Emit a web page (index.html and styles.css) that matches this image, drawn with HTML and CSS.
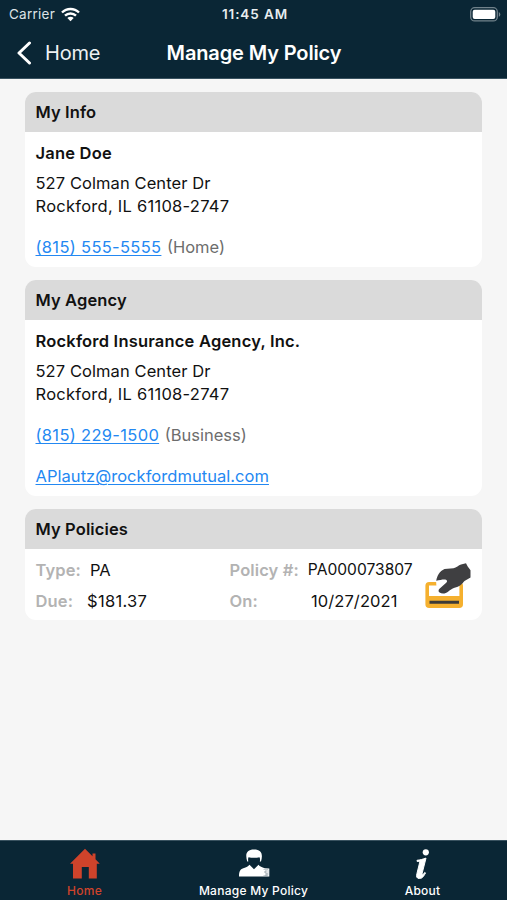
FILE: index.html
```html
<!DOCTYPE html>
<html lang="en">
<head>
<meta charset="utf-8">
<title>Manage My Policy</title>
<link rel="stylesheet" href="styles.css">
</head>
<body>
<div class="app">
  <header class="top">
    <div class="status">
      <div class="carrier"><span>Carrier</span>
        <svg width="19" height="15" viewBox="0 0 19 15" fill="none" stroke="#fff" stroke-width="2.4"><path d="M1 5.5C5.8.8 13.2.8 18 5.5M4 8.7c3.1-3 7.900-3 11 0"/><path d="M6.300 11.100c1.900-1.700 4.500-1.700 6.400 0L9.500 14.300z" fill="#fff" stroke="none"/></svg>
      </div>
      <div class="clock">11:45 AM</div>
      <svg class="battery" width="31" height="15" viewBox="0 0 31 15"><rect x=".7" y=".7" width="26.600" height="13.200" rx="4" fill="none" stroke="#71828b" stroke-width="1.300"/><rect x="2.700" y="2.700" width="22.600" height="9.300" rx="2" fill="#fff"/><path d="M28.800 5v4.800q1.500-.8 1.500-2.400T28.800 5z" fill="#71828b"/></svg>
    </div>
    <nav class="navbar">
      <a class="back"><svg width="16" height="24" viewBox="0 0 16 24"><path d="M13.500 2 3 12l10.500 10" fill="none" stroke="#fff" stroke-width="3" stroke-linecap="round" stroke-linejoin="round"/></svg><span>Home</span></a>
      <h1>Manage My Policy</h1>
    </nav>
  </header>
  <main>
    <section class="card">
      <h2>My Info</h2>
      <div class="body">
        <h3>Jane Doe</h3>
        <p class="addr">527 Colman Center Dr<br><span class="city">Rockford, IL 61108-2747</span></p>
        <p class="contact"><a class="link phone">(815) 555-5555</a><span class="kind">(Home)</span></p>
      </div>
    </section>
    <section class="card">
      <h2>My Agency</h2>
      <div class="body">
        <h3>Rockford Insurance Agency, Inc.</h3>
        <p class="addr">527 Colman Center Dr<br><span class="city">Rockford, IL 61108-2747</span></p>
        <p class="contact"><a class="link phone">(815) 229-1500</a><span class="kind">(Business)</span></p>
        <p class="contact"><a class="link email">APlautz@rockfordmutual.com</a></p>
      </div>
    </section>
    <section class="card">
      <h2>My Policies</h2>
      <div class="policy">
        <div class="fields">
          <div class="field"><b>Type:</b><span class="type">PA</span></div>
          <div class="field"><b>Policy #:</b><span class="number">PA000073807</span></div>
          <div class="field"><b>Due:</b><span class="due">$181.37</span></div>
          <div class="field"><b>On:</b><span class="date">10/27/2021</span></div>
        </div>
        <svg class="pay" width="48" height="48" viewBox="0 0 48 48"><rect x="2.200" y="21.700" width="34" height="22.600" rx="2" fill="#fff" stroke="#f5b02e" stroke-width="3.600"/><path d="M2 34h34.500v10H2z" fill="#f5b02e"/><path d="M4.500 38.800h29.500v3H4.500z" fill="#3b3a38"/><path d="M11 18h20l2.500 1v5.500l-7 2-8 6-6-2-1-5z" fill="#fff"/><path d="M11.200 18.700C12.300 13.500 14.500 9.300 19.500 7l9-.700c3-.500 5-3.300 7.500-3.800L41 1.200l1.700 3.300 2.800 3.700v7.300L39.500 19c-2.500 3-5 5.800-10 6.700-2.500 1-4.500 2.200-6.500 4-2.500 2-6 2.500-8.800.5-1-1-.7-2.500.3-3.500l5-4.500c2.500-1.800 3.500-3.300 1.500-4.500-2-.800-5.600.2-9.800 1z" fill="#3f3f41"/></svg>
      </div>
    </section>
  </main>
  <footer class="tabs">
    <a class="tab active"><svg width="32" height="32" viewBox="0 0 32 32"><path d="M16 .800 1 15.800h3V30.500h8.800V19h7v11.500h8V15.800h3L26.500 11.300V5.500h-3v2.800z" fill="#cf432b"/></svg><span>Home</span></a>
    <a class="tab middle"><svg width="32" height="32" viewBox="0 0 32 32"><path d="M9.200 13.500C7 6 8.500 1.500 16 1.500s9.200 4.500 7 12h-1.200c.4-1.600.3-3.200-.3-4.300-3.300.7-7.700.7-11 0-.5 1.100-.5 2.700-.2 4.300z" fill="#fff"/><path d="M1 28.500c0-5 1-7.300 4.300-8.300 3.200-1 5-1.800 6.200-3.400l4.500 4.400 4.500-4.400c1.300 1.800 3.500 2.700 6.200 3.400l4.600.3v8z" fill="#fff"/><path d="M25.500 21.500h4.500v6h-4.500" fill="none" stroke="#aeb8be" stroke-width=".7"/><path d="M29 23h-2v2h2v2h-2" fill="none" stroke="#8b989f" stroke-width=".8"/></svg><span>Manage My Policy</span></a>
    <a class="tab"><svg width="32" height="32" viewBox="0 0 32 32"><circle cx="18.800" cy="4.300" r="3.100" fill="#fff"/><path d="M10 12.300c3-.3 5.500-1 9-2.200l-3.800 15c-.5 2 .7 2 2.500-.7l.8.500c-2 4-3.500 5.600-6 5.600-2.800 0-3.400-1.800-2.600-4.800l2.400-9.700c.6-2.200.1-2.600-2.300-2.700z" fill="#fff" stroke="#fff" stroke-width="1"/></svg><span>About</span></a>
  </footer>
</div>
</body>
</html>
```
FILE: styles.css
```css
* { box-sizing: border-box; }
body { margin: 0; font-family: Inter, "Liberation Sans", sans-serif; color: #111; background: #f6f6f6; }
h1, h2, h3, p { margin: 0; }
.app { height: 900px; display: flex; flex-direction: column; }
.top { height: 79px; background: #0a2635; color: #fff; border-bottom: 1px solid #395260; flex: none; }
.status { height: 28px; display: grid; grid-template-columns: 1fr auto 1fr; align-items: center; padding: 0 6px 0 9px; font-size: 13px; }
.carrier { display: flex; align-items: center; gap: 6px; font-size: 13.500px; letter-spacing: .25px; color: #dde3e6; }
.clock { font-size: 13.500px; font-weight: 600; letter-spacing: .9px; color: #e8edef; }
.battery { justify-self: end; }
.navbar { height: 49px; display: grid; grid-template-columns: 1fr auto 1fr; align-items: center; padding: 0 15px 0 16px; }
.back { display: flex; align-items: center; gap: 13px; font-size: 20px; letter-spacing: -.2px; color: #edf1f3; }
h1 { font-size: 20px; font-weight: 600; letter-spacing: -.13px; }
main { flex: 1; padding: 13px 25px 0; display: flex; flex-direction: column; gap: 13px; }
.card { background: #fff; border-radius: 11px; overflow: hidden; }
h2 { height: 40px; line-height: 41px; padding-left: 10.500px; background: #dadada; font-size: 16.500px; font-weight: 600; letter-spacing: .12px; }
.body { padding: 9px 10.500px 8px; }
h3 { font-size: 16.500px; line-height: 24px; font-weight: 600; letter-spacing: .2px; }
.addr { margin-top: 7px; font-size: 16.500px; line-height: 23px; letter-spacing: .08px; }
.city { letter-spacing: .26px; }
.contact { margin-top: 18px; font-size: 16.500px; line-height: 23px; display: flex; gap: 5.500px; }
.link { color: #2388f2; text-decoration: underline; text-underline-offset: 2px; text-decoration-thickness: 1px; }
.phone { letter-spacing: .32px; }
.email { letter-spacing: .04px; }
.kind { color: #6d6d6d; }
.policy { height: 71px; display: flex; padding: 5px 9px 4px 10.500px; }
.fields { display: grid; grid-template-columns: 194px 195.500px; grid-template-rows: 31px 31px; font-size: 16.500px; align-items: center; }
.field { display: flex; align-items: center; }
.field b { color: #b3b3b3; font-weight: 600; letter-spacing: .12px; }
.type { margin-left: 9px; }
.due { margin-left: 14px; letter-spacing: .3px; }
.number { margin-left: 9px; font-size: 15.600px; }
.date { margin-left: 53px; letter-spacing: .1px; }
.pay { margin-top: 8px; flex: none; }
.tabs { height: 60px; flex: none; background: #0a2635; border-top: 1px solid #395260; display: grid; grid-template-columns: repeat(3, 1fr); color: #fff; font-size: 12px; font-weight: 500; }
.tab { display: flex; flex-direction: column; align-items: center; padding-top: 7px; line-height: 16px; gap: 3px; letter-spacing: .25px; }
.active { color: #cf432b; }
```
